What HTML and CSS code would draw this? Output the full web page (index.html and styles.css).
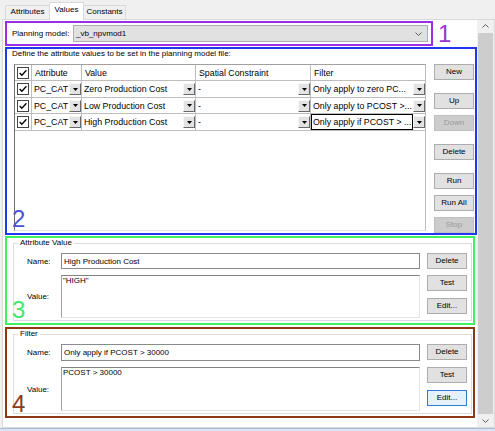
FILE: index.html
```html
<!DOCTYPE html>
<html>
<head>
<meta charset="utf-8">
<link rel="stylesheet" href="styles.css">
</head>
<body>
<div class="tabs">
  <div class="tab t-attr">Attributes</div>
  <div class="tab t-val active">Values</div>
  <div class="tab t-const">Constants</div>
</div>
<div class="panel">
  <div class="content">
    <div class="row1">
      <div class="box purple">
        <span class="pm">Planning model:</span>
        <div class="combo">
          <span>_vb_npvmod1</span>
          <svg class="chev" width="7" height="4" viewBox="0 0 7 4"><polyline points="0.5,0.5 3.5,3.5 6.5,0.5" fill="none" stroke="#606060" stroke-width="1"/></svg>
        </div>
      </div>
      <span class="num n1">1</span>
    </div>

    <div class="box blue">
      <div class="define">Define the attribute values to be set in the planning model file:</div>
      <div class="gridrow">
        <div class="table">
          <div class="grid">
            <div class="c cb"><svg width="12" height="12" viewBox="0 0 12 12"><rect x="0.5" y="0.5" width="11" height="11" fill="#fff" stroke="#444"/><path d="M2.6 6 L4.9 8.3 L9.4 3.2" fill="none" stroke="#000" stroke-width="1.3"/></svg></div>
            <div class="c h">Attribute</div>
            <div class="c h">Value</div>
            <div class="c h">Spatial Constraint</div>
            <div class="c h last">Filter</div>

            <div class="c cb"><svg width="12" height="12" viewBox="0 0 12 12"><rect x="0.5" y="0.5" width="11" height="11" fill="#fff" stroke="#444"/><path d="M2.6 6 L4.9 8.3 L9.4 3.2" fill="none" stroke="#000" stroke-width="1.3"/></svg></div>
            <div class="c"><span class="tx">PC_CAT</span><span class="dd"><svg width="5" height="3" viewBox="0 0 5 3"><polygon points="0,0 5,0 2.5,3" fill="#000"/></svg></span></div>
            <div class="c"><span class="tx">Zero Production Cost</span><span class="dd"><svg width="5" height="3" viewBox="0 0 5 3"><polygon points="0,0 5,0 2.5,3" fill="#000"/></svg></span></div>
            <div class="c"><span class="tx">-</span><span class="dd"><svg width="5" height="3" viewBox="0 0 5 3"><polygon points="0,0 5,0 2.5,3" fill="#000"/></svg></span></div>
            <div class="c last"><span class="tx">Only apply to zero PC...</span><span class="dd"><svg width="5" height="3" viewBox="0 0 5 3"><polygon points="0,0 5,0 2.5,3" fill="#000"/></svg></span></div>

            <div class="c cb"><svg width="12" height="12" viewBox="0 0 12 12"><rect x="0.5" y="0.5" width="11" height="11" fill="#fff" stroke="#444"/><path d="M2.6 6 L4.9 8.3 L9.4 3.2" fill="none" stroke="#000" stroke-width="1.3"/></svg></div>
            <div class="c"><span class="tx">PC_CAT</span><span class="dd"><svg width="5" height="3" viewBox="0 0 5 3"><polygon points="0,0 5,0 2.5,3" fill="#000"/></svg></span></div>
            <div class="c"><span class="tx">Low Production Cost</span><span class="dd"><svg width="5" height="3" viewBox="0 0 5 3"><polygon points="0,0 5,0 2.5,3" fill="#000"/></svg></span></div>
            <div class="c"><span class="tx">-</span><span class="dd"><svg width="5" height="3" viewBox="0 0 5 3"><polygon points="0,0 5,0 2.5,3" fill="#000"/></svg></span></div>
            <div class="c last"><span class="tx">Only apply to PCOST &gt;...</span><span class="dd"><svg width="5" height="3" viewBox="0 0 5 3"><polygon points="0,0 5,0 2.5,3" fill="#000"/></svg></span></div>

            <div class="c cb"><svg width="12" height="12" viewBox="0 0 12 12"><rect x="0.5" y="0.5" width="11" height="11" fill="#fff" stroke="#444"/><path d="M2.6 6 L4.9 8.3 L9.4 3.2" fill="none" stroke="#000" stroke-width="1.3"/></svg></div>
            <div class="c"><span class="tx">PC_CAT</span><span class="dd"><svg width="5" height="3" viewBox="0 0 5 3"><polygon points="0,0 5,0 2.5,3" fill="#000"/></svg></span></div>
            <div class="c"><span class="tx">High Production Cost</span><span class="dd"><svg width="5" height="3" viewBox="0 0 5 3"><polygon points="0,0 5,0 2.5,3" fill="#000"/></svg></span></div>
            <div class="c"><span class="tx">-</span><span class="dd"><svg width="5" height="3" viewBox="0 0 5 3"><polygon points="0,0 5,0 2.5,3" fill="#000"/></svg></span></div>
            <div class="c last"><span class="tx focus">Only apply if PCOST &gt; ...</span><span class="dd"><svg width="5" height="3" viewBox="0 0 5 3"><polygon points="0,0 5,0 2.5,3" fill="#000"/></svg></span></div>
          </div>
        </div>
        <div class="btncol">
          <button class="btn">New</button>
          <button class="btn m13">Up</button>
          <button class="btn m6 dis">Down</button>
          <button class="btn m13">Delete</button>
          <button class="btn m13">Run</button>
          <button class="btn m6">Run All</button>
          <button class="btn m6 dis">Stop</button>
        </div>
      </div>
      <span class="num n2">2</span>
    </div>

    <div class="box green">
      <fieldset class="group">
        <legend>Attribute Value</legend>
        <div class="form">
          <span class="lbl">Name:</span>
          <div class="field">High Production Cost</div>
          <button class="btn">Delete</button>
          <span class="lbl">Value:</span>
          <div class="area">"HIGH"</div>
          <div class="stack">
            <button class="btn">Test</button>
            <button class="btn">Edit...</button>
          </div>
        </div>
      </fieldset>
      <span class="num n3">3</span>
    </div>

    <div class="box brown">
      <fieldset class="group">
        <legend>Filter</legend>
        <div class="form tall">
          <span class="lbl">Name:</span>
          <div class="field">Only apply if PCOST &gt; 30000</div>
          <button class="btn">Delete</button>
          <span class="lbl">Value:</span>
          <div class="area">PCOST &gt; 30000</div>
          <div class="stack">
            <button class="btn">Test</button>
            <button class="btn focused">Edit...</button>
          </div>
        </div>
      </fieldset>
      <span class="num n4">4</span>
    </div>
  </div>
  <div class="scrollbar">
    <div class="sb-arrow"><svg width="7" height="4" viewBox="0 0 7 4"><polyline points="0.5,3.5 3.5,0.5 6.5,3.5" fill="none" stroke="#606060" stroke-width="1"/></svg></div>
    <div class="sb-thumb"></div>
    <div class="sb-arrow"><svg width="7" height="4" viewBox="0 0 7 4"><polyline points="0.5,0.5 3.5,3.5 6.5,0.5" fill="none" stroke="#606060" stroke-width="1"/></svg></div>
  </div>
</div>
<div class="status"></div>
</body>
</html>
```
FILE: styles.css
```css
* { box-sizing: border-box; }
body {
  margin: 0;
  width: 495px;
  height: 431px;
  overflow: hidden;
  background: #f0f0f0;
  font-family: "Liberation Sans", Arial, sans-serif;
  font-size: 8px;
  color: #000;
}
.tabs {
  display: flex;
  align-items: flex-end;
  height: 19px;
  padding-left: 5px;
}
.tab {
  height: 14px;
  border: 1px solid #d9d9d9;
  border-bottom: none;
  background: #f0f0f0;
  line-height: 12px;
  text-align: center;
  margin-right: -1px;
  white-space: nowrap;
}
.t-attr { width: 45px; }
.t-val { width: 35px; }
.t-const { width: 43px; }
.tab.active {
  height: 18px;
  background: #fff;
  line-height: 13px;
  margin-bottom: -1px;
  position: relative;
  z-index: 1;
}
.panel {
  margin-left: 2px;
  width: 493px;
  height: 409px;
  border: 1px solid #d9d9d9;
  background: #fff;
  display: flex;
}
.content {
  flex: 1;
  padding-left: 2px;
}
.row1 {
  display: flex;
  align-items: center;
  gap: 5px;
  margin-top: 1px;
}
.box { position: relative; }
.purple {
  width: 428px;
  height: 25px;
  border: 2px solid #9a30e6;
  display: flex;
  align-items: center;
  padding: 0 3px 0 5px;
}
.pm { width: 61px; flex: none; white-space: nowrap; }
.combo {
  flex: 1;
  height: 17px;
  background: #e1e1e1;
  border: 1px solid #adadad;
  display: flex;
  align-items: center;
  justify-content: space-between;
  padding: 0 5px 0 2px;
}
.num {
  font-size: 24px;
  line-height: 24px;
}
.n1 { color: #9b35d0; }
.n2 { position: absolute; left: 5px; bottom: 2px; color: #4a50d8; }
.n3 { position: absolute; left: 5px; bottom: 1px; color: #3ee86a; }
.n4 { position: absolute; left: 5px; bottom: 0; color: #8b3a1a; }

.blue {
  width: 472px;
  height: 188px;
  margin-top: 1px;
  border: 2px solid #2236ee;
  padding: 0 2px 0 5px;
}
.define { line-height: 10px; white-space: nowrap; }
.gridrow {
  display: flex;
  gap: 8px;
  margin-top: 5px;
  margin-left: 2px;
}
.table {
  width: 412px;
  height: 167px;
  border-top: 1px solid #a0a0a0;
  border-left: 1px solid #6d6d6d;
  border-right: 1px solid #bdbdbd;
  border-bottom: 1px solid #e6e6e6;
  background: #fff;
}
.grid {
  display: grid;
  grid-template-columns: 17px 50px 114px 115px 114px;
  grid-template-rows: 16px 17px 16px 17px;
}
.c {
  border-right: 1px solid #bdbdbd;
  border-bottom: 1px solid #bdbdbd;
  display: flex;
  align-items: center;
  font-size: 8.8px;
  white-space: nowrap;
  overflow: hidden;
  padding-left: 2px;
}
.c.last { border-right: none; }
.c.h { padding-left: 3px; }
.c.cb { justify-content: center; padding-left: 0; }
.c.cb svg { display: block; }
.tx {
  flex: 1;
  overflow: hidden;
  height: 100%;
  display: flex;
  align-items: center;
}
.tx.focus {
  border: 1px solid #000;
  margin-left: -2px;
  padding-left: 1px;
}
.dd {
  flex: none;
  width: 12px;
  height: 12px;
  background: #e3e3e3;
  border: 1px solid;
  border-color: #f7f7f7 #696969 #696969 #f7f7f7;
  display: flex;
  align-items: center;
  justify-content: center;
}
.dd svg { display: block; }
.btncol {
  display: flex;
  flex-direction: column;
  width: 40px;
}
.btn {
  display: block;
  width: 40px;
  height: 16px;
  padding: 0;
  margin: 0;
  font-family: "Liberation Sans", Arial, sans-serif;
  font-size: 8px;
  line-height: 14px;
  color: #000;
  background: #e1e1e1;
  border: 1px solid #adadad;
  text-align: center;
}
.btn.m13 { margin-top: 13px; }
.btn.m6 { margin-top: 6px; }
.btn.dis { background: #cccccc; border-color: #bfbfbf; color: #9a9a9a; }
.btn.focused { border-color: #2a7ad6; background: #e5f1fb; }

.green {
  width: 470px;
  margin-top: 1px;
  border: 2px solid #3cf25e;
  padding: 0 1px 2px 6px;
}
.brown {
  width: 470px;
  margin-top: 2px;
  border: 2px solid #8b3a14;
  padding: 0 1px 2px 6px;
}
.group {
  margin: 0;
  padding: 5px 4px 2px 4px;
  border: 1px solid #dcdcdc;
  min-width: 0;
}
.group legend {
  padding: 0 2px;
  font-size: 8px;
  line-height: 10px;
}
.form {
  margin-left: 9px;
  display: grid;
  grid-template-columns: 27px 359px 40px;
  grid-template-rows: 16px 43px;
  column-gap: 7px;
  row-gap: 6px;
}
.form.tall { grid-template-rows: 17px 44px; }
.lbl { align-self: center; white-space: nowrap; }
.field {
  border: 1px solid #8a8a8a;
  background: #fff;
  padding-left: 2px;
  display: flex;
  align-items: center;
  white-space: nowrap;
}
.area {
  border: 1px solid;
  border-color: #828282 #e3e3e3 #e3e3e3 #a0a0a0;
  background: #fff;
  padding: 0 1px;
  line-height: 10px;
}
.stack {
  display: flex;
  flex-direction: column;
  gap: 7px;
}
.scrollbar {
  width: 17px;
  flex: none;
  background: #f0f0f0;
  display: flex;
  flex-direction: column;
}
.sb-arrow {
  height: 12px;
  display: flex;
  align-items: center;
  justify-content: center;
}
.sb-arrow svg { display: block; }
.sb-thumb {
  flex: 1;
  margin: 1px 1px;
  background: #cdcdcd;
}
.status {
  height: 3px;
  border-top: 1px solid #a9bcd3;
  background: #dae5f1;
}
```
